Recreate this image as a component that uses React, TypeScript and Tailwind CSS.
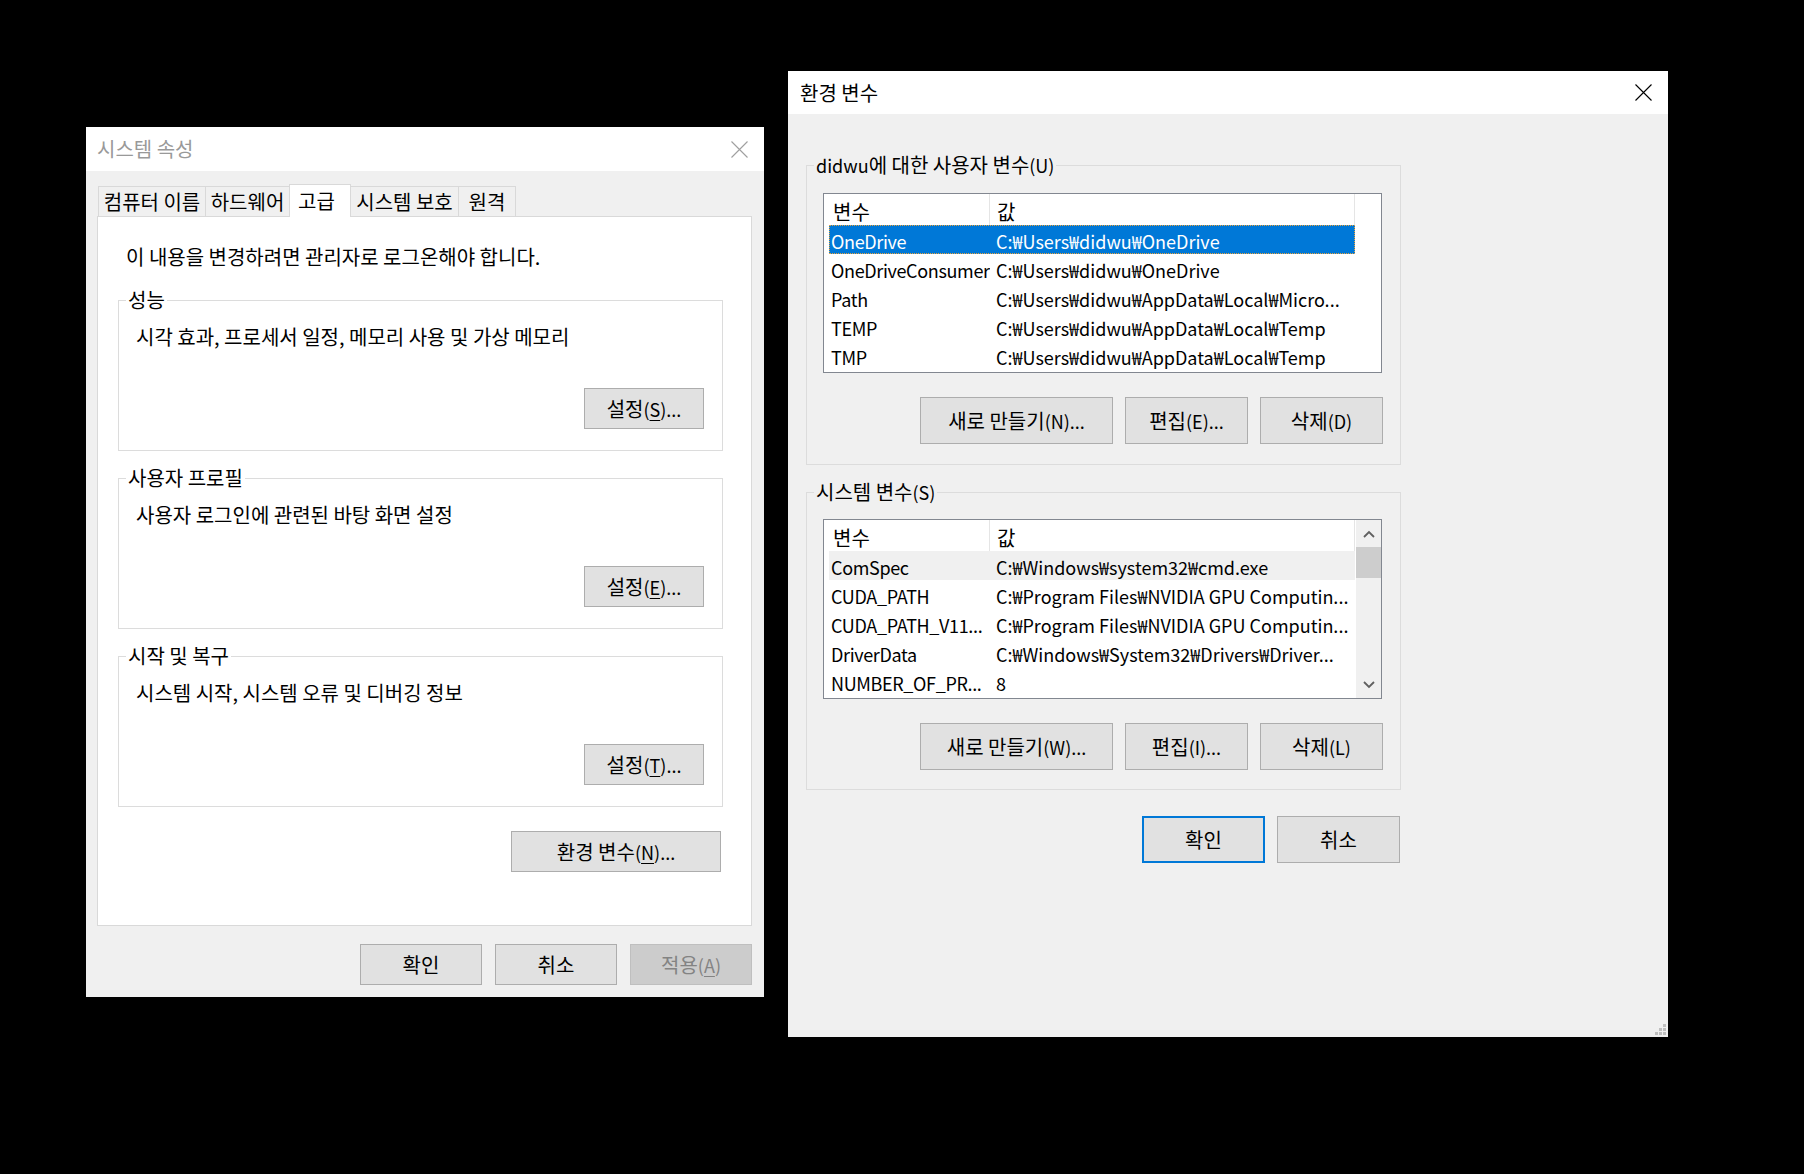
import React from "react";

function CloseX({ color }: { color: string }) {
  return (
    <svg width="17" height="17" viewBox="0 0 17 17" className="block">
      <path d="M0.5 0.5 L16.5 16.5 M16.5 0.5 L0.5 16.5" stroke={color} strokeWidth="1.1" fill="none" />
    </svg>
  );
}

function U({ children }: { children: React.ReactNode }) {
  return <span className="underline underline-offset-[3px] decoration-1">{children}</span>;
}

function L({ children }: { children: React.ReactNode }) {
  return <span className="text-[18px]">{children}</span>;
}

function WinBtn({ className, children }: { className: string; children: React.ReactNode }) {
  return (
    <div className={"flex items-center justify-center border text-[20px] leading-none whitespace-nowrap " + className}>
      {children}
    </div>
  );
}

function Tab({ className, children }: { className: string; children: React.ReactNode }) {
  return (
    <div className={"flex items-center justify-center border-[#d9d9d9] text-[20px] leading-none whitespace-nowrap " + className}>
      {children}
    </div>
  );
}

function Group({
  className,
  label,
  desc,
  btn,
}: {
  className: string;
  label: string;
  desc: string;
  btn: React.ReactNode;
}) {
  return (
    <fieldset className={"ml-[20px] mr-[28px] border border-[#dcdcdc] " + className}>
      <legend className="ml-[7px] px-[2px] text-[20px] leading-[26px]">{label}</legend>
      <p className="mt-[11px] pl-[17px] text-[20px] leading-[26px] whitespace-nowrap">{desc}</p>
      <div className="flex justify-end mt-[38px] pr-[18px] pb-[21px]">
        <WinBtn className="w-[120px] h-[41px] bg-[#e1e1e1] border-[#adadad]">{btn}</WinBtn>
      </div>
    </fieldset>
  );
}

function SystemProperties() {
  return (
    <div className="absolute left-[86px] top-[127px] w-[678px] h-[870px] bg-[#f0f0f0] flex flex-col">
      <div className="h-[44px] shrink-0 bg-white flex items-center justify-between pl-[11px] pr-[16px]">
        <span className="text-[20px] leading-none text-[#999999]">시스템 속성</span>
        <CloseX color="#a0a0a0" />
      </div>
      <div className="pl-[11px] pr-[12px] pt-[13px]">
        <div className="flex items-end h-[32px] pl-[1px]">
          <Tab className="w-[107px] h-[30px] border-l border-t bg-[#f0f0f0]">컴퓨터 이름</Tab>
          <Tab className="w-[84px] h-[30px] border-l border-t bg-[#f0f0f0]">하드웨어</Tab>
          <Tab className="relative z-10 w-[62px] h-[33px] -mb-px border-l border-t border-r bg-white justify-start pl-[8px]">
            고급
          </Tab>
          <Tab className="w-[107px] h-[30px] border-t bg-[#f0f0f0]">시스템 보호</Tab>
          <Tab className="w-[58px] h-[30px] border-l border-t border-r bg-[#f0f0f0]">원격</Tab>
        </div>
        <div className="h-[710px] bg-white border border-[#d9d9d9] flex flex-col">
          <p className="mt-[27px] pl-[28px] text-[20px] leading-[26px]">
            이 내용을 변경하려면 관리자로 로그온해야 합니다.
          </p>
          <Group
            className="mt-[17px]"
            label="성능"
            desc="시각 효과, 프로세서 일정, 메모리 사용 및 가상 메모리"
            btn={
              <>
                설정
                <L>
                  (<U>S</U>)...
                </L>
              </>
            }
          />
          <Group
            className="mt-[14px]"
            label="사용자 프로필"
            desc="사용자 로그인에 관련된 바탕 화면 설정"
            btn={
              <>
                설정
                <L>
                  (<U>E</U>)...
                </L>
              </>
            }
          />
          <Group
            className="mt-[14px]"
            label="시작 및 복구"
            desc="시스템 시작, 시스템 오류 및 디버깅 정보"
            btn={
              <>
                설정
                <L>
                  (<U>T</U>)...
                </L>
              </>
            }
          />
          <div className="flex justify-end mt-[24px] pr-[30px]">
            <WinBtn className="w-[210px] h-[41px] bg-[#e1e1e1] border-[#adadad]">
              환경 변수
              <L>
                (<U>N</U>)...
              </L>
            </WinBtn>
          </div>
        </div>
      </div>
      <div className="flex justify-end gap-[13px] pr-[12px] mt-[18px]">
        <WinBtn className="w-[122px] h-[41px] bg-[#e1e1e1] border-[#adadad]">확인</WinBtn>
        <WinBtn className="w-[122px] h-[41px] bg-[#e1e1e1] border-[#adadad]">취소</WinBtn>
        <WinBtn className="w-[122px] h-[41px] bg-[#cccccc] border-[#bfbfbf] text-[#838383]">
          적용
          <L>
            (<U>A</U>)
          </L>
        </WinBtn>
      </div>
    </div>
  );
}

type Row = { name: string; value: string; selected?: boolean; hover?: boolean };

const userRows: Row[] = [
  { name: "OneDrive", value: "C:₩Users₩didwu₩OneDrive", selected: true },
  { name: "OneDriveConsumer", value: "C:₩Users₩didwu₩OneDrive" },
  { name: "Path", value: "C:₩Users₩didwu₩AppData₩Local₩Micro..." },
  { name: "TEMP", value: "C:₩Users₩didwu₩AppData₩Local₩Temp" },
  { name: "TMP", value: "C:₩Users₩didwu₩AppData₩Local₩Temp" },
];

const sysRows: Row[] = [
  { name: "ComSpec", value: "C:₩Windows₩system32₩cmd.exe", hover: true },
  { name: "CUDA_PATH", value: "C:₩Program Files₩NVIDIA GPU Computin..." },
  { name: "CUDA_PATH_V11...", value: "C:₩Program Files₩NVIDIA GPU Computin..." },
  { name: "DriverData", value: "C:₩Windows₩System32₩Drivers₩Driver..." },
  { name: "NUMBER_OF_PR...", value: "8" },
];

function ListView({ rows, scroll }: { rows: Row[]; scroll?: boolean }) {
  return (
    <div className="ml-[16px] w-[559px] h-[180px] border border-[#828790] bg-white flex overflow-hidden">
      <div className="w-[532px] flex flex-col">
        <div className="ml-[5px] w-[526px] h-[31px] flex text-[20px]">
          <div className="w-[161px] h-full pl-[4px] pt-[4px] flex items-center border-r border-[#e5e5e5]">변수</div>
          <div className="w-[365px] h-full pl-[7px] pt-[4px] flex items-center border-r border-[#e5e5e5]">값</div>
        </div>
        {rows.map((r) => (
          <div
            key={r.name}
            className={
              "ml-[5px] w-[526px] h-[29px] shrink-0 pt-[4px] flex items-center text-[18px] whitespace-nowrap " +
              (r.selected
                ? "bg-[#0078d7] text-white outline-1 outline-dotted outline-[#e8a33d] -outline-offset-1"
                : r.hover
                ? "bg-[#f0f0f0]"
                : "")
            }
          >
            <div className="w-[161px] shrink-0 pl-[2px] tracking-[-0.35px] overflow-hidden">{r.name}</div>
            <div className="pl-[6px] overflow-hidden">{r.value}</div>
          </div>
        ))}
      </div>
      {scroll ? (
        <div className="ml-auto w-[25px] h-full bg-[#f0f0f0] flex flex-col">
          <div className="h-[27px] flex items-center justify-center">
            <svg width="12" height="8" viewBox="0 0 12 8">
              <polyline points="1,7 6,2 11,7" fill="none" stroke="#606060" strokeWidth="1.8" />
            </svg>
          </div>
          <div className="h-[31px] bg-[#cdcdcd]" />
          <div className="flex-1" />
          <div className="h-[27px] flex items-center justify-center">
            <svg width="12" height="8" viewBox="0 0 12 8">
              <polyline points="1,1 6,6 11,1" fill="none" stroke="#606060" strokeWidth="1.8" />
            </svg>
          </div>
        </div>
      ) : null}
    </div>
  );
}

function EnvVars() {
  return (
    <div className="absolute left-[788px] top-[71px] w-[880px] h-[966px] bg-[#f0f0f0] flex flex-col">
      <div className="h-[43px] shrink-0 bg-white flex items-center justify-between pl-[12px] pr-[16px]">
        <span className="text-[20px] leading-none text-black">환경 변수</span>
        <CloseX color="#000000" />
      </div>
      <div className="ml-[18px] w-[595px] flex flex-col">
        <fieldset className="mt-[38px] border border-[#dcdcdc]">
          <legend className="ml-[7px] px-[2px] text-[20px] leading-[26px]">
            <L>didwu</L>에 대한 사용자 변수<L>(U)</L>
          </legend>
          <div className="mt-[15px]">
            <ListView rows={userRows} />
          </div>
          <div className="flex justify-end gap-[12px] mt-[24px] pr-[17px] pb-[20px]">
            <WinBtn className="w-[193px] h-[47px] bg-[#e1e1e1] border-[#adadad]">
              새로 만들기<L>(N)...</L>
            </WinBtn>
            <WinBtn className="w-[123px] h-[47px] bg-[#e1e1e1] border-[#adadad]">
              편집<L>(E)...</L>
            </WinBtn>
            <WinBtn className="w-[123px] h-[47px] bg-[#e1e1e1] border-[#adadad]">
              삭제<L>(D)</L>
            </WinBtn>
          </div>
        </fieldset>
        <fieldset className="mt-[14px] border border-[#dcdcdc]">
          <legend className="ml-[7px] px-[2px] text-[20px] leading-[26px]">
            시스템 변수<L>(S)</L>
          </legend>
          <div className="mt-[14px]">
            <ListView rows={sysRows} scroll />
          </div>
          <div className="flex justify-end gap-[12px] mt-[24px] pr-[17px] pb-[19px]">
            <WinBtn className="w-[193px] h-[47px] bg-[#e1e1e1] border-[#adadad]">
              새로 만들기<L>(W)...</L>
            </WinBtn>
            <WinBtn className="w-[123px] h-[47px] bg-[#e1e1e1] border-[#adadad]">
              편집<L>(I)...</L>
            </WinBtn>
            <WinBtn className="w-[123px] h-[47px] bg-[#e1e1e1] border-[#adadad]">
              삭제<L>(L)</L>
            </WinBtn>
          </div>
        </fieldset>
        <div className="flex justify-end gap-[12px] mt-[26px] pr-[1px]">
          <WinBtn className="w-[123px] h-[47px] bg-[#e1e1e1] border-2 border-[#0078d7]">확인</WinBtn>
          <WinBtn className="w-[123px] h-[47px] bg-[#e1e1e1] border-[#adadad]">취소</WinBtn>
        </div>
      </div>
      <svg className="absolute right-[2px] bottom-[2px]" width="11" height="11" viewBox="0 0 11 11">
        <rect x="8" y="0" width="3" height="3" fill="#bfbfbf" />
        <rect x="4" y="4" width="3" height="3" fill="#bfbfbf" />
        <rect x="8" y="4" width="3" height="3" fill="#bfbfbf" />
        <rect x="0" y="8" width="3" height="3" fill="#bfbfbf" />
        <rect x="4" y="8" width="3" height="3" fill="#bfbfbf" />
        <rect x="8" y="8" width="3" height="3" fill="#bfbfbf" />
      </svg>
    </div>
  );
}

export default function App() {
  return (
    <div className="relative w-[1804px] h-[1174px] bg-black overflow-hidden text-black font-['Noto_Sans_CJK_KR',sans-serif]">
      <SystemProperties />
      <EnvVars />
    </div>
  );
}
